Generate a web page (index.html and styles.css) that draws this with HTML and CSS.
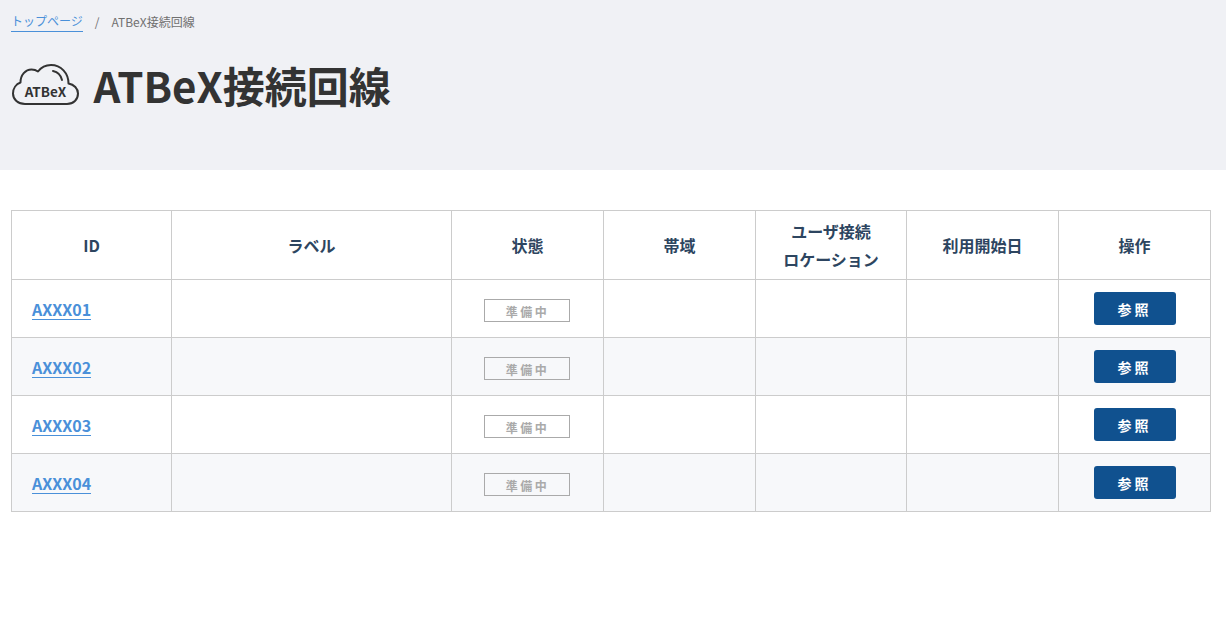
FILE: index.html
```html
<!DOCTYPE html>
<html lang="ja">
<head>
<meta charset="utf-8">
<title>ATBeX接続回線</title>
<link rel="stylesheet" href="styles.css">
</head>
<body>
<header class="page-head">
  <nav class="crumbs">
    <a class="crumb-link" href="#">トップページ</a>
    <span class="crumb-sep">/</span>
    <span class="crumb-current">ATBeX接続回線</span>
  </nav>
  <div class="title-row">
    <svg class="logo" width="68" height="42" viewBox="0 0 68 42" fill="none" stroke="#333" stroke-width="2" stroke-linecap="round" stroke-linejoin="round">
      <path d="M13 40H55C61.500 40 66 35.500 66 29.500C66 24.500 62 20.500 56.500 19.500C56.500 9 49 1 39 1C33 1 29 3.500 26 7.500C24 6 21.500 5.500 19.500 5.500C13.500 5.500 8.500 11 8.500 18.500C4 20 1 24.500 1 29.500C1 35.500 6 40 13 40Z"/>
      <path d="M41 7C45.500 8 49 11.500 50 16"/>
      <text class="logo-text" x="33.500" y="32.500" text-anchor="middle">ATBeX</text>
    </svg>
    <h1 class="title">ATBeX接続回線</h1>
  </div>
</header>
<main class="content">
  <table class="grid">
    <colgroup>
      <col class="c-id"><col class="c-label"><col class="c-std"><col class="c-std"><col class="c-narrow"><col class="c-std"><col class="c-std">
    </colgroup>
    <thead>
      <tr><th>ID</th><th>ラベル</th><th>状態</th><th>帯域</th><th>ユーザ接続<br>ロケーション</th><th>利用開始日</th><th>操作</th></tr>
    </thead>
    <tbody>
      <tr><td class="id"><a href="#">AXXX01</a></td><td></td><td class="center"><span class="status">準備中</span></td><td></td><td></td><td></td><td class="center"><a class="btn" href="#">参照</a></td></tr>
      <tr><td class="id"><a href="#">AXXX02</a></td><td></td><td class="center"><span class="status">準備中</span></td><td></td><td></td><td></td><td class="center"><a class="btn" href="#">参照</a></td></tr>
      <tr><td class="id"><a href="#">AXXX03</a></td><td></td><td class="center"><span class="status">準備中</span></td><td></td><td></td><td></td><td class="center"><a class="btn" href="#">参照</a></td></tr>
      <tr><td class="id"><a href="#">AXXX04</a></td><td></td><td class="center"><span class="status">準備中</span></td><td></td><td></td><td></td><td class="center"><a class="btn" href="#">参照</a></td></tr>
    </tbody>
  </table>
</main>
</body>
</html>
```

FILE: styles.css
```css
* { box-sizing: border-box; }
html, body { margin: 0; padding: 0; background: #fff; }
body {
  font-family: "Noto Sans CJK JP", "Noto Sans", sans-serif;
  color: #333;
  overflow: hidden;
}
.page-head {
  background: #f0f1f5;
  height: 170px;
  padding: 11px 11px 0 12px;
}
.crumbs {
  display: flex;
  align-items: center;
  font-size: 12px;
  line-height: 20px;
  color: #707070;
}
.crumb-link {
  color: #4a90d9;
  text-decoration: none;
  border-bottom: 1px solid #4a90d9;
  margin-left: -1px;
}
.crumb-sep { margin: 0 12px; }
.title-row {
  display: flex;
  align-items: center;
  gap: 13.500px;
  margin-top: 23px;
}
.logo { flex: none; overflow: visible; }
.logo-text {
  font-family: "Noto Sans CJK JP", sans-serif;
  font-size: 13.500px;
  font-weight: 700;
  fill: #333;
  stroke: none;
}
.title {
  margin: 0;
  font-size: 42px;
  font-weight: 700;
  line-height: 60px;
  color: #333;
}
.content { padding: 40px 15px 0 11px; }
.grid {
  width: 1200px;
  table-layout: fixed;
  border-collapse: collapse;
}
.c-id { width: 160px; }
.c-label { width: 280px; }
.c-std { width: 152px; }
.c-narrow { width: 151px; }
.grid th, .grid td { border: 1px solid #ccc; padding: 0; }
.grid th {
  height: 69px;
  font-size: 16px;
  font-weight: 700;
  line-height: 28px;
  color: #2d4560;
  text-align: center;
}
.grid td { height: 58px; vertical-align: middle; }
.grid tbody tr:nth-child(even) { background: #f7f8fa; }
.id { padding-left: 20px !important; }
.id a {
  font-size: 16px;
  font-weight: 700;
  line-height: 20px;
  color: #4a90d9;
  text-decoration: none;
  border-bottom: 1px solid #4a90d9;
  display: inline-block;
  margin-top: 1px;
}
.center { text-align: center; }
.status {
  display: block;
  width: 86px;
  height: 23px;
  margin: 3px auto 0;
  padding-left: 2px;
  transform: translateX(-1px);
  border: 1px solid #aaa;
  font-size: 12px;
  font-weight: 700;
  line-height: 23px;
  letter-spacing: 2.500px;
  color: #aaa;
  text-align: center;
}
.btn {
  display: block;
  width: 82px;
  height: 33px;
  margin: 0 auto 1px;
  border-radius: 3px;
  background: #10518f;
  color: #fff;
  font-size: 14px;
  font-weight: 700;
  line-height: 34px;
  letter-spacing: 3px;
  text-decoration: none;
  text-align: center;
}
```
